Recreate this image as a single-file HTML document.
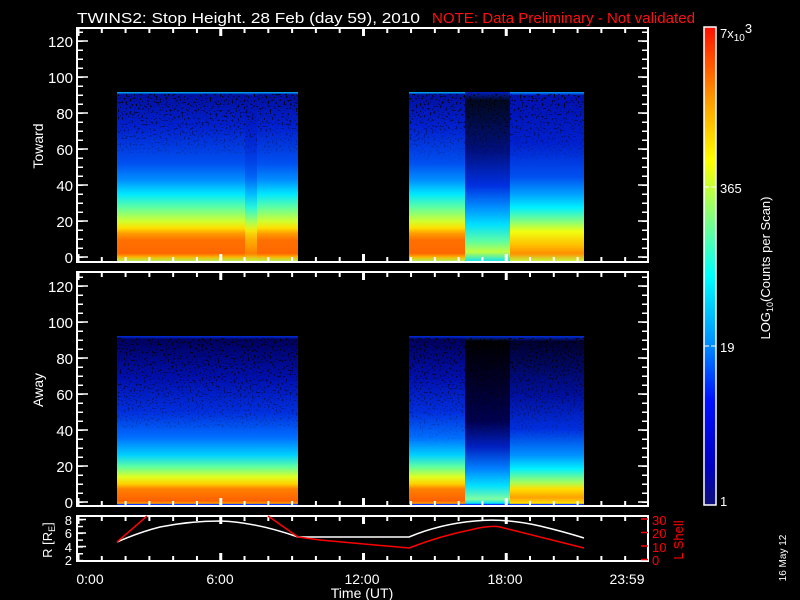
<!DOCTYPE html>
<html><head><meta charset="utf-8">
<style>html,body{margin:0;padding:0;background:#000;width:800px;height:600px;overflow:hidden}
svg text{font-family:"Liberation Sans",sans-serif;fill:#fff}</style></head>
<body>
<svg width="800" height="600" viewBox="0 0 800 600" xmlns="http://www.w3.org/2000/svg">
<defs>
<linearGradient id="cb" x1="0" y1="1" x2="0" y2="0">
<stop offset="0" stop-color="#10107a"/><stop offset="0.08" stop-color="#0000c0"/>
<stop offset="0.22" stop-color="#0010ff"/><stop offset="0.34" stop-color="#0090ff"/>
<stop offset="0.48" stop-color="#00ffff"/><stop offset="0.6" stop-color="#80ff80"/>
<stop offset="0.72" stop-color="#ffff00"/><stop offset="0.84" stop-color="#ffa000"/>
<stop offset="1" stop-color="#ff1000"/></linearGradient>
<linearGradient id="g1" x1="0" y1="0" x2="0" y2="1">
<stop offset="0" stop-color="#00c0ff"/><stop offset="0.015" stop-color="#0010a0"/>
<stop offset="0.2" stop-color="#0020d0"/><stop offset="0.42" stop-color="#0050f0"/>
<stop offset="0.52" stop-color="#0090ff"/><stop offset="0.6" stop-color="#00e8ff"/>
<stop offset="0.68" stop-color="#60ffa0"/><stop offset="0.76" stop-color="#d0ff30"/>
<stop offset="0.8" stop-color="#ffe000"/><stop offset="0.83" stop-color="#ffa000"/>
<stop offset="0.87" stop-color="#ff7000"/><stop offset="0.95" stop-color="#ff6800"/>
<stop offset="0.97" stop-color="#ffb000"/><stop offset="1" stop-color="#a0ff60"/></linearGradient>
<linearGradient id="g2" x1="0" y1="0" x2="0" y2="1">
<stop offset="0" stop-color="#0020c0"/><stop offset="0.05" stop-color="#000820"/>
<stop offset="0.35" stop-color="#001080"/><stop offset="0.55" stop-color="#0030e0"/>
<stop offset="0.68" stop-color="#0090ff"/><stop offset="0.78" stop-color="#00e0ff"/>
<stop offset="0.88" stop-color="#60ffa0"/><stop offset="0.94" stop-color="#c0ff40"/>
<stop offset="1" stop-color="#00e0ff"/></linearGradient>
<linearGradient id="g3" x1="0" y1="0" x2="0" y2="1">
<stop offset="0" stop-color="#00a0ff"/><stop offset="0.02" stop-color="#0010b0"/>
<stop offset="0.3" stop-color="#0020d0"/><stop offset="0.5" stop-color="#0050f0"/>
<stop offset="0.6" stop-color="#00a0ff"/><stop offset="0.68" stop-color="#00f0ff"/>
<stop offset="0.76" stop-color="#80ff80"/><stop offset="0.82" stop-color="#f0ff10"/>
<stop offset="0.9" stop-color="#ffc000"/><stop offset="0.95" stop-color="#ff9000"/>
<stop offset="1" stop-color="#c0ff40"/></linearGradient>
<linearGradient id="h1" x1="0" y1="0" x2="0" y2="1">
<stop offset="0" stop-color="#0030e0"/><stop offset="0.02" stop-color="#000060"/>
<stop offset="0.25" stop-color="#0010b0"/><stop offset="0.45" stop-color="#0030e0"/>
<stop offset="0.6" stop-color="#0070ff"/><stop offset="0.7" stop-color="#00d0ff"/>
<stop offset="0.77" stop-color="#60ffa0"/><stop offset="0.83" stop-color="#e0ff20"/>
<stop offset="0.87" stop-color="#ffd000"/><stop offset="0.9" stop-color="#ff8000"/>
<stop offset="0.97" stop-color="#ff6000"/><stop offset="0.985" stop-color="#ffa000"/>
<stop offset="0.99" stop-color="#0030ff"/><stop offset="1" stop-color="#0030ff"/></linearGradient>
<linearGradient id="h2" x1="0" y1="0" x2="0" y2="1">
<stop offset="0" stop-color="#0030e0"/><stop offset="0.03" stop-color="#000000"/>
<stop offset="0.5" stop-color="#000050"/><stop offset="0.65" stop-color="#0020c0"/>
<stop offset="0.78" stop-color="#0080ff"/><stop offset="0.88" stop-color="#00e0ff"/>
<stop offset="0.96" stop-color="#80ffa0"/><stop offset="0.985" stop-color="#00e0ff"/>
<stop offset="0.99" stop-color="#0030ff"/><stop offset="1" stop-color="#0030ff"/></linearGradient>
<linearGradient id="h3" x1="0" y1="0" x2="0" y2="1">
<stop offset="0" stop-color="#0030e0"/><stop offset="0.03" stop-color="#000030"/>
<stop offset="0.35" stop-color="#0010a0"/><stop offset="0.55" stop-color="#0030e0"/>
<stop offset="0.7" stop-color="#0090ff"/><stop offset="0.78" stop-color="#00f0ff"/>
<stop offset="0.86" stop-color="#a0ff60"/><stop offset="0.9" stop-color="#ffe000"/>
<stop offset="0.95" stop-color="#ffa000"/><stop offset="0.985" stop-color="#ffe000"/>
<stop offset="0.99" stop-color="#0030ff"/><stop offset="1" stop-color="#0030ff"/></linearGradient>
<linearGradient id="fade" x1="0" y1="0" x2="0" y2="1">
<stop offset="0" stop-color="#fff"/><stop offset="1" stop-color="#000"/></linearGradient>
<mask id="fm" maskContentUnits="objectBoundingBox"><rect width="1" height="1" fill="url(#fade)"/></mask>
<pattern id="xmin" x="77" y="0" width="23.79" height="600" patternUnits="userSpaceOnUse"><rect x="0" y="0" width="2" height="600" fill="#fff"/></pattern>
<pattern id="xmaj" x="76.5" y="0" width="142.75" height="600" patternUnits="userSpaceOnUse"><rect x="0" y="0" width="3" height="600" fill="#fff"/></pattern>
<pattern id="ymin1" x="0" y="256.5" width="20" height="9" patternUnits="userSpaceOnUse"><rect x="0" y="0" width="20" height="1.5" fill="#fff"/></pattern>
<pattern id="ymin2" x="0" y="501.5" width="20" height="9" patternUnits="userSpaceOnUse"><rect x="0" y="0" width="20" height="1.5" fill="#fff"/></pattern>
<pattern id="ymin3" x="0" y="519" width="20" height="6.8" patternUnits="userSpaceOnUse"><rect x="0" y="0" width="20" height="1.5" fill="#fff"/></pattern>
<filter id="spk" x="0" y="0" width="1" height="1"><feTurbulence type="fractalNoise" baseFrequency="0.5" numOctaves="1" seed="3"/><feColorMatrix values="0 0 0 0 0  0 0 0 0 0  0 0 0 0 0  0 0 0 -14 5.5"/></filter>
</defs>

<text x="77" y="23" font-size="15" textLength="343" lengthAdjust="spacingAndGlyphs">TWINS2: Stop Height. 28 Feb (day  59), 2010</text>
<text x="432" y="23" font-size="15" style="fill:#ff1010" textLength="263" lengthAdjust="spacingAndGlyphs">NOTE: Data Preliminary - Not validated</text>

<rect x="117" y="92" width="181" height="170" fill="url(#g1)"/>
<rect x="245" y="92" width="12" height="170" fill="url(#g3)" opacity="0.6"/>
<rect x="409" y="92" width="56" height="170" fill="url(#g1)"/>
<rect x="465" y="92" width="45" height="170" fill="url(#g2)"/>
<rect x="510" y="92" width="74" height="170" fill="url(#g3)"/>
<g mask="url(#fm)">
<rect x="117" y="94" width="181" height="60" filter="url(#spk)"/>
<rect x="409" y="94" width="175" height="70" filter="url(#spk)"/>
</g>
<rect x="117" y="336" width="181" height="170" fill="url(#h1)"/>
<rect x="409" y="336" width="56" height="170" fill="url(#h1)"/>
<rect x="465" y="336" width="45" height="170" fill="url(#h2)"/>
<rect x="510" y="336" width="74" height="170" fill="url(#h3)"/>
<g mask="url(#fm)">
<rect x="117" y="338" width="181" height="90" filter="url(#spk)"/>
<rect x="409" y="338" width="175" height="110" filter="url(#spk)"/>
</g>

<g fill="none" stroke="#fff" stroke-width="2">
<rect x="77" y="28" width="571" height="234"/>
<rect x="77" y="272" width="571" height="234"/>
<rect x="77" y="516" width="571" height="45"/>
</g>
<g>
<rect x="77" y="29" width="571" height="4" fill="url(#xmin)"/><rect x="77" y="29" width="572" height="7" fill="url(#xmaj)"/>
<rect x="77" y="257" width="571" height="4" fill="url(#xmin)"/><rect x="77" y="254" width="572" height="7" fill="url(#xmaj)"/>
<rect x="77" y="273" width="571" height="4" fill="url(#xmin)"/><rect x="77" y="273" width="572" height="7" fill="url(#xmaj)"/>
<rect x="77" y="501" width="571" height="4" fill="url(#xmin)"/><rect x="77" y="498" width="572" height="7" fill="url(#xmaj)"/>
<rect x="77" y="517" width="571" height="4" fill="url(#xmin)"/><rect x="77" y="517" width="572" height="7" fill="url(#xmaj)"/>
<rect x="77" y="556" width="571" height="4" fill="url(#xmin)"/><rect x="77" y="553" width="572" height="7" fill="url(#xmaj)"/>
</g>
<rect x="78" y="30" width="5" height="231" fill="url(#ymin1)"/>
<rect x="642" y="30" width="5" height="231" fill="url(#ymin1)"/>
<rect x="78" y="274" width="5" height="231" fill="url(#ymin2)"/>
<rect x="642" y="274" width="5" height="231" fill="url(#ymin2)"/>
<rect x="78" y="517" width="5" height="43" fill="url(#ymin3)"/>
<path d="M78 257H88M78 221H88M78 185H88M78 149H88M78 113H88M78 77H88M78 41H88M638 257H648M638 221H648M638 185H648M638 149H648M638 113H648M638 77H648M638 41H648
M78 502H88M78 466H88M78 430H88M78 394H88M78 358H88M78 322H88M78 286H88M638 502H648M638 466H648M638 430H648M638 394H648M638 358H648M638 322H648M638 286H648
M78 519.5H86M78 533H86M78 546.5H86" stroke="#fff" stroke-width="1.5"/>
<path d="M641 519H648M641 532.5H648M641 546H648M641 559.5H648" stroke="#f00" stroke-width="1.5"/>

<g font-size="15" text-anchor="end">
<text x="73" y="263">0</text><text x="73" y="227">20</text><text x="73" y="191">40</text><text x="73" y="155">60</text><text x="73" y="119">80</text><text x="73" y="83">100</text><text x="73" y="47">120</text>
<text x="73" y="508">0</text><text x="73" y="472">20</text><text x="73" y="436">40</text><text x="73" y="400">60</text><text x="73" y="364">80</text><text x="73" y="328">100</text><text x="73" y="292">120</text>
<text x="72" y="565" font-size="13">2</text><text x="72" y="552" font-size="13">4</text><text x="72" y="538" font-size="13">6</text><text x="72" y="525" font-size="13">8</text>
</g>
<g font-size="13">
<text x="652" y="565" style="fill:#f00">0</text><text x="652" y="552" style="fill:#f00">10</text><text x="652" y="538" style="fill:#f00">20</text><text x="652" y="525" style="fill:#f00">30</text>
</g>
<text transform="translate(43,146) rotate(-90)" font-size="14" text-anchor="middle">Toward</text>
<text transform="translate(43,390) rotate(-90)" font-size="14" text-anchor="middle">Away</text>
<text transform="translate(52,540) rotate(-90)" font-size="13" text-anchor="middle">R [R<tspan font-size="9" dy="3">E</tspan><tspan dy="-3">]</tspan></text>
<text transform="translate(683,540) rotate(-90)" font-size="13" text-anchor="middle" style="fill:#f00">L Shell</text>

<g font-size="14" text-anchor="middle">
<text x="90" y="584">0:00</text><text x="220" y="584">6:00</text><text x="362" y="584">12:00</text><text x="505" y="584">18:00</text><text x="627" y="584">23:59</text>
<text x="362" y="598">Time (UT)</text>
</g>

<path d="M117 542 Q140 532 160 527 Q190 521 220 521 Q255 522 298 537 L409 537 Q440 524 475 521 Q505 518 540 526 Q565 532 584 538" fill="none" stroke="#fff" stroke-width="1.5"/>
<path d="M117 542 L147 516 M268 516 L298 537 L320 540 L409 548 Q440 536 470 530 Q490 525 500 527 L584 548" fill="none" stroke="#f00" stroke-width="1.5"/>

<rect x="704" y="27" width="12" height="478" fill="url(#cb)" stroke="#fff" stroke-width="1.5"/>
<path d="M704 187H709M711 187H716M704 346H709M711 346H716" stroke="#fff" stroke-width="1"/>
<g font-size="13">
<text x="720" y="38">7x<tspan font-size="10" dy="3">10</tspan><tspan dy="-8">3</tspan></text>
<text x="720" y="193">365</text><text x="720" y="352">19</text><text x="720" y="506">1</text>
</g>
<text transform="translate(770,268) rotate(-90)" font-size="13" text-anchor="middle">LOG<tspan font-size="9" dy="3">10</tspan><tspan dy="-3">(Counts per Scan)</tspan></text>
<text transform="translate(786,558) rotate(-90)" font-size="10" text-anchor="middle">16 May 12</text>
</svg>
</body></html>
